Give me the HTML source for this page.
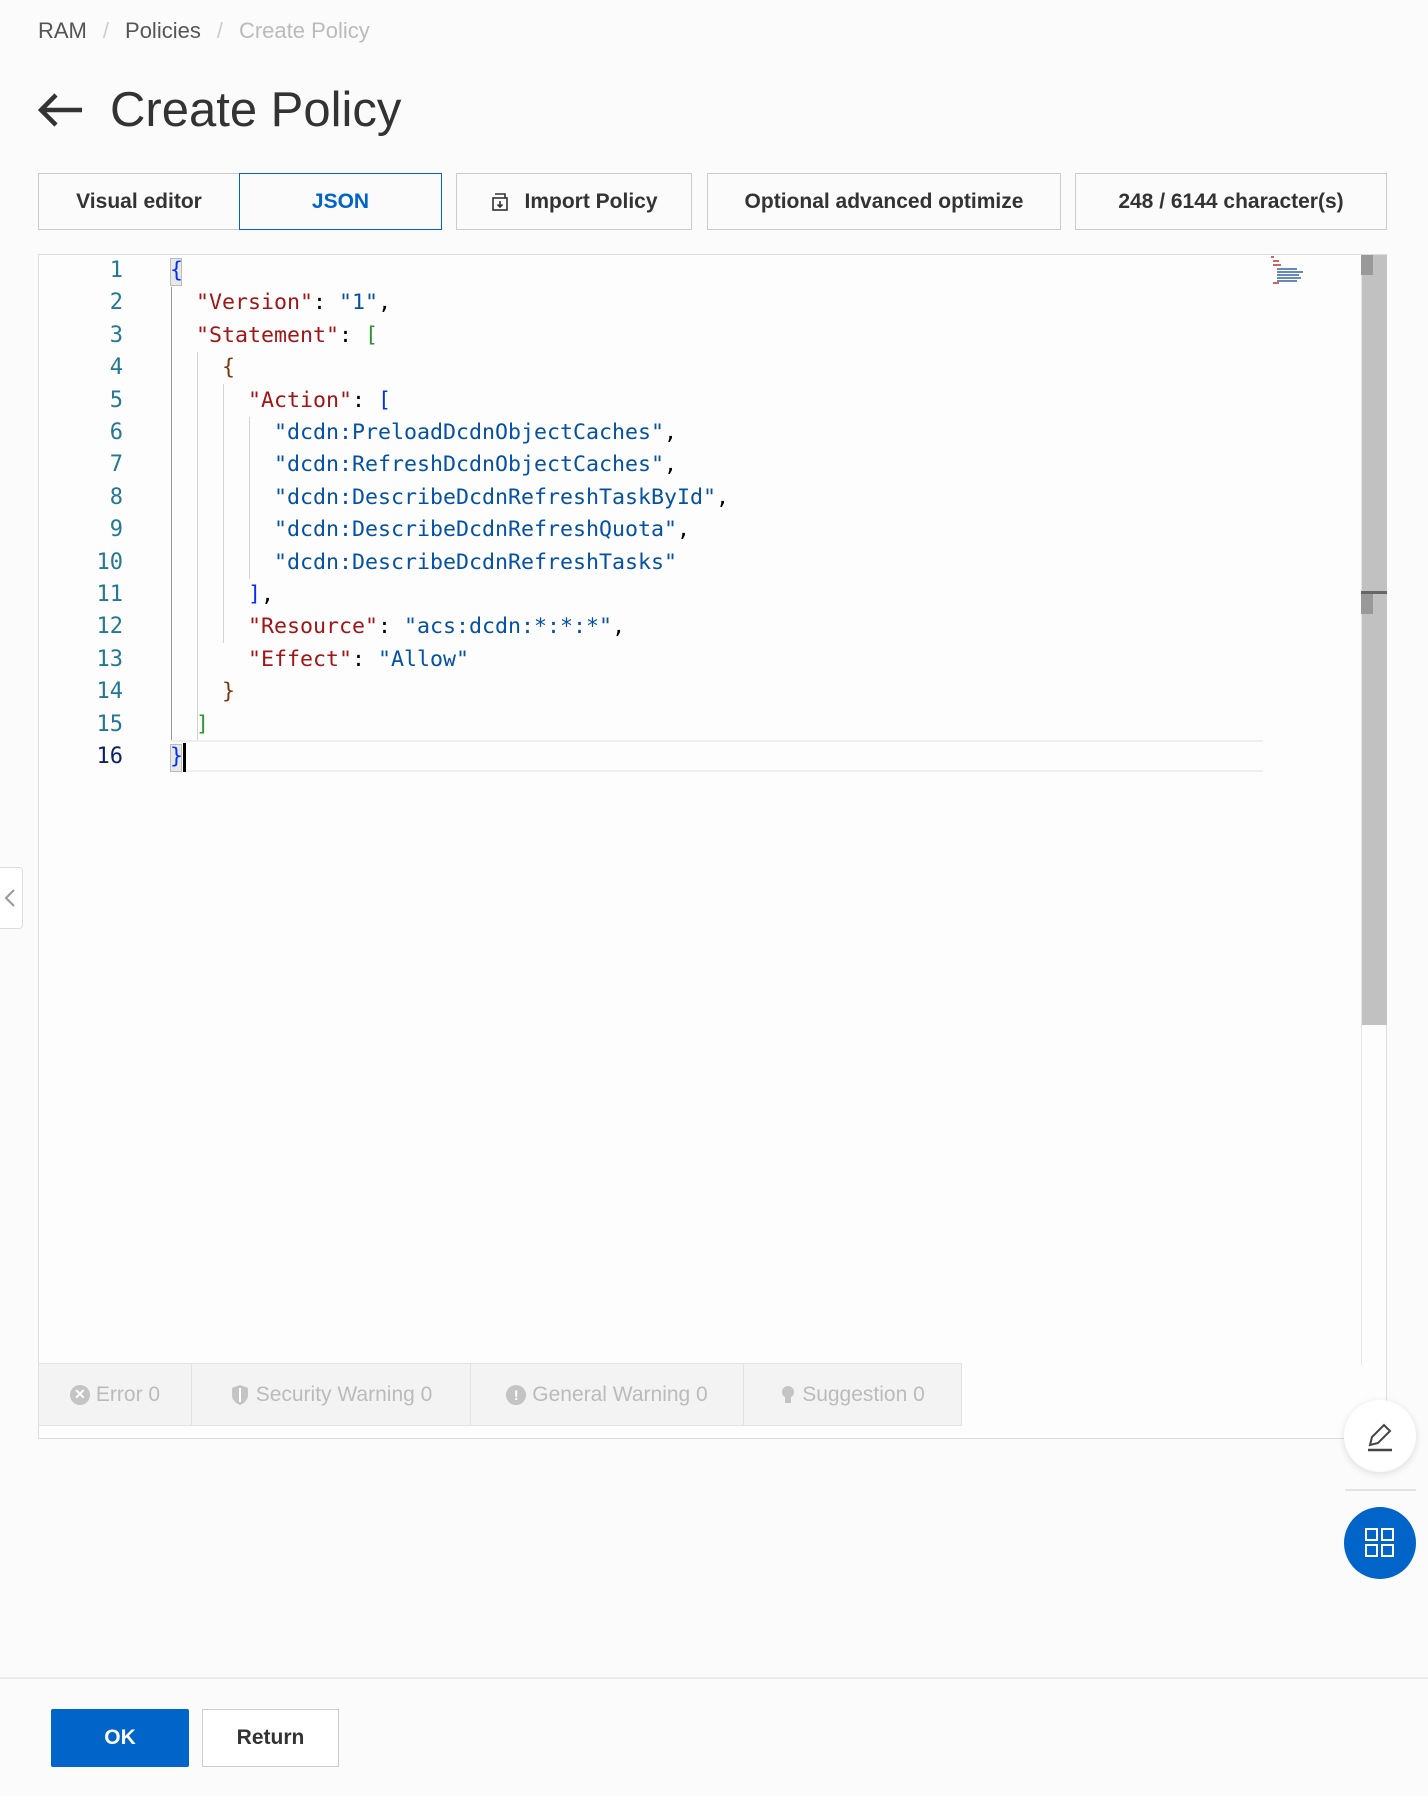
<!DOCTYPE html>
<html><head><meta charset="utf-8"><style>
*{box-sizing:border-box;margin:0;padding:0}
body{width:1428px;height:1796px;background:#fbfbfb;font-family:"Liberation Sans",sans-serif;position:relative;overflow:hidden;color:#333}
.abs{position:absolute}
.bc{left:38px;top:18px;font-size:22px;color:#555}
.bc span.s{color:#ccc;margin:0 16px}
.bc .last{color:#bbb}
.title{left:110px;top:80px;font-size:49px;color:#333;line-height:60px}
.tab{top:173px;height:57px;border:1px solid #ccc;background:#fbfbfb;font-size:21px;font-weight:bold;color:#333;display:flex;align-items:center;justify-content:center}
.editor{left:38px;top:254px;width:1349px;height:1185px;border:1px solid #ddd;background:#fdfdfd}
.ln{position:absolute;left:0;width:84px;text-align:right;font-family:"DejaVu Sans Mono",monospace;font-size:22px;color:#237893;line-height:32.4px}
.code{position:absolute;left:131px;top:0;font-family:"DejaVu Sans Mono",monospace;font-size:21.6px;line-height:32.4px;white-space:pre;color:#000}
.k{color:#a31515}.v{color:#0451a5}.b1{color:#0431fa}.b2{color:#319331}.b3{color:#7b3814}
.guide{position:absolute;width:1px;background:#d3d3d3}
.bt{top:1363px;height:63px;background:#f3f3f3;border:1px solid #e2e2e2;font-size:21px;color:#bbb;display:flex;align-items:center;justify-content:center;gap:6px}
.ic{width:20px;height:20px;border-radius:50%;background:#c4c4c4;color:#fff;font-size:14px;display:inline-flex;align-items:center;justify-content:center;font-weight:bold}
</style></head><body>
<div class="abs bc">RAM<span class="s">/</span>Policies<span class="s">/</span><span class="last">Create Policy</span></div>
<svg class="abs" style="left:38px;top:92px" width="46" height="36" viewBox="0 0 46 36"><path d="M44 18H4M18 3L3 18l15 15" fill="none" stroke="#333" stroke-width="4.5"/></svg>
<div class="abs title">Create Policy</div>

<div class="abs tab" style="left:38px;width:202px">Visual editor</div>
<div class="abs tab" style="left:239px;width:203px;border-color:#0064c8;color:#0064c8">JSON</div>
<div class="abs tab" style="left:456px;width:236px"><svg width="20" height="20" viewBox="0 0 20 20" style="margin-right:14px"><rect x="3" y="6" width="14" height="12" fill="none" stroke="#333" stroke-width="1.6"/><path d="M5 2h10v4M10 9v6M7.5 12.5L10 15l2.5-2.5" fill="none" stroke="#333" stroke-width="1.6"/></svg>Import Policy</div>
<div class="abs tab" style="left:707px;width:354px">Optional advanced optimize</div>
<div class="abs tab" style="left:1075px;width:312px">248 / 6144 character(s)</div>

<div class="abs editor">
<div class="ln" style="top:0">1<br>2<br>3<br>4<br>5<br>6<br>7<br>8<br>9<br>10<br>11<br>12<br>13<br>14<br>15<br><span style="color:#0b216f">16</span></div>
<div style="position:absolute;left:131px;top:485px;width:1093px;height:32px;border-top:2px solid #eee;border-bottom:2px solid #eee"></div>
<div class="guide" style="left:132px;top:32px;height:453px;background:#999"></div>
<div class="guide" style="left:158px;top:97px;height:388px"></div>
<div class="guide" style="left:184px;top:129px;height:259px"></div>
<div class="guide" style="left:210px;top:162px;height:162px"></div>
<div style="position:absolute;left:131px;top:3px;width:12px;height:28px;background:#e8e8e8;border:1px solid #bbb"></div>
<div style="position:absolute;left:131px;top:489px;width:12px;height:28px;background:#e8e8e8;border:1px solid #bbb"></div>
<div class="code"><span class="b1">{</span>
  <span class="k">"Version"</span>: <span class="v">"1"</span>,
  <span class="k">"Statement"</span>: <span class="b2">[</span>
    <span class="b3">{</span>
      <span class="k">"Action"</span>: <span class="b1">[</span>
        <span class="v">"dcdn:PreloadDcdnObjectCaches"</span>,
        <span class="v">"dcdn:RefreshDcdnObjectCaches"</span>,
        <span class="v">"dcdn:DescribeDcdnRefreshTaskById"</span>,
        <span class="v">"dcdn:DescribeDcdnRefreshQuota"</span>,
        <span class="v">"dcdn:DescribeDcdnRefreshTasks"</span>
      <span class="b1">]</span>,
      <span class="k">"Resource"</span>: <span class="v">"acs:dcdn:*:*:*"</span>,
      <span class="k">"Effect"</span>: <span class="v">"Allow"</span>
    <span class="b3">}</span>
  <span class="b2">]</span>
<span class="b1">}</span></div>
<div style="position:absolute;left:144px;top:488px;width:3px;height:29px;background:#000"></div>
<svg style="position:absolute;left:1230px;top:0" width="44" height="32"><g stroke-width="2"><path d="M2 2h3M4 6h6M4 10h8" stroke="#c66"/><path d="M8 14h20M8 17h26M8 20h22M8 23h24M8 26h20" stroke="#68b"/><path d="M4 28h6" stroke="#c66"/></g></svg>
<div style="position:absolute;left:1322px;top:0;width:26px;height:1110px;border-left:1px solid #e5e5e5"></div>
<div style="position:absolute;left:1323px;top:0;width:25px;height:770px;background:#c1c1c1"></div>
<div style="position:absolute;left:1322px;top:336px;width:26px;height:3px;background:#666"></div>
<div style="position:absolute;left:1322px;top:0;width:12px;height:20px;background:#999"></div>
<div style="position:absolute;left:1322px;top:339px;width:12px;height:20px;background:#999"></div>
</div>

<div class="abs bt" style="left:38px;width:154px"><span class="ic">✕</span>Error 0</div>
<div class="abs bt" style="left:191px;width:280px"><svg width="20" height="22" viewBox="0 0 20 22"><path d="M10 1L2 4v7c0 5 4 8.5 8 10 4-1.5 8-5 8-10V4z" fill="#c4c4c4"/><path d="M10 4v14" stroke="#fff" stroke-width="2"/></svg>Security Warning 0</div>
<div class="abs bt" style="left:470px;width:274px"><span class="ic">!</span>General Warning 0</div>
<div class="abs bt" style="left:743px;width:219px"><svg width="16" height="22" viewBox="0 0 16 22"><circle cx="8" cy="8" r="6" fill="#c4c4c4"/><rect x="5" y="13" width="6" height="6" fill="#c4c4c4"/></svg>Suggestion 0</div>

<div class="abs" style="left:0;top:867px;width:23px;height:62px;background:#fff;border:1px solid #ddd;border-left:none;border-radius:0 4px 4px 0"></div>
<svg class="abs" style="left:3px;top:888px" width="14" height="20"><path d="M11 2L3 10l8 8" fill="none" stroke="#999" stroke-width="2"/></svg>

<div class="abs" style="left:1344px;top:1400px;width:72px;height:72px;border-radius:50%;background:#fff;box-shadow:0 2px 8px rgba(0,0,0,.12)"></div>
<svg class="abs" style="left:1362px;top:1418px" width="36" height="36" viewBox="0 0 36 36"><path d="M8 27l2-8L22 7l6 6-12 12z" fill="none" stroke="#444" stroke-width="2"/><path d="M6 32h24" stroke="#444" stroke-width="2.5"/></svg>
<div class="abs" style="left:1345px;top:1489px;width:71px;height:2px;background:#e3e3e3"></div>
<div class="abs" style="left:1344px;top:1507px;width:72px;height:72px;border-radius:50%;background:#0064c8"></div>
<svg class="abs" style="left:1365px;top:1528px" width="30" height="30" viewBox="0 0 30 30"><g fill="none" stroke="#fff" stroke-width="2"><rect x="1" y="1" width="11" height="11"/><rect x="17" y="1" width="11" height="11"/><rect x="1" y="17" width="11" height="11"/><rect x="17" y="17" width="11" height="11"/></g></svg>

<div class="abs" style="left:0;top:1677px;width:1428px;height:2px;background:#ececec"></div>
<div class="abs" style="left:51px;top:1709px;width:138px;height:58px;background:#0064c8;color:#fff;font-size:21px;font-weight:bold;display:flex;align-items:center;justify-content:center;border-radius:2px">OK</div>
<div class="abs" style="left:202px;top:1709px;width:137px;height:58px;background:#fff;border:1px solid #ccc;color:#333;font-size:21px;font-weight:bold;display:flex;align-items:center;justify-content:center">Return</div>
</body></html>
